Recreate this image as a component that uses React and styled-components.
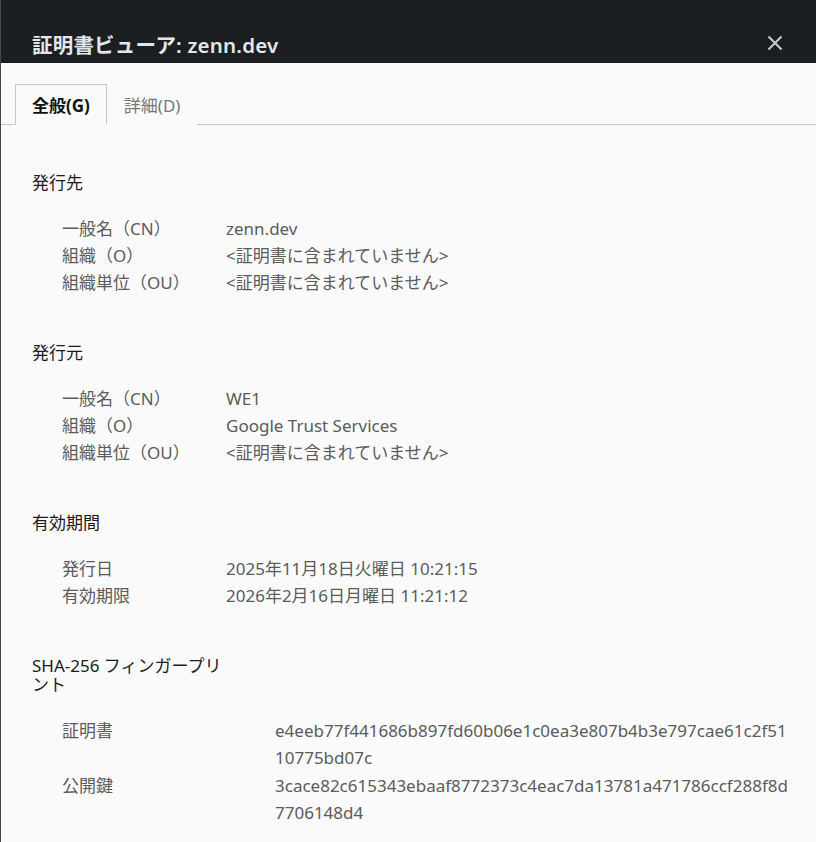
import React from "react";
import styled, { createGlobalStyle } from "styled-components";

const Global = createGlobalStyle`
  html, body { margin: 0; padding: 0; background: #fafafa; }
  body { font-family: "Noto Sans", "Noto Sans CJK JP", sans-serif; }
`;

const Window = styled.div`
  width: 816px;
  min-height: 842px;
  box-sizing: border-box;
  background: #fafafa;
  border-left: 1px solid #45484b;
  display: flex;
  flex-direction: column;
`;

const Header = styled.header`
  height: 63px;
  box-sizing: border-box;
  background: #1b1f22;
  display: flex;
  align-items: flex-end;
  justify-content: space-between;
  padding: 0 30px 4px 31px;
`;

const Title = styled.h1`
  margin: 0;
  font-size: 20.5px;
  font-weight: 600;
  line-height: 28px;
  color: #e4e7ea;
  letter-spacing: 0.2px;
`;

const CloseButton = styled.button`
  width: 22px;
  height: 22px;
  margin-bottom: 5px;
  padding: 0;
  border: none;
  background: transparent;
  display: flex;
  align-items: center;
  justify-content: center;
  cursor: pointer;
`;

const TabBar = styled.nav`
  display: flex;
  padding: 21px 0 0 14px;
  border-bottom: 1px solid #c8c8c8;
`;

const Tab = styled.button`
  height: 41px;
  box-sizing: border-box;
  margin-bottom: -1px;
  padding: 0 16px;
  font-family: inherit;
  font-size: 17px;
  font-weight: ${(p) => (p.$active ? 700 : 400)};
  color: ${(p) => (p.$active ? "#111" : "#767676")};
  background: #fafafa;
  border: 1px solid ${(p) => (p.$active ? "#c8c8c8" : "transparent")};
  border-bottom-color: ${(p) => (p.$active ? "#fafafa" : "transparent")};
  cursor: pointer;
`;

const Content = styled.main`
  display: flex;
  flex-direction: column;
  gap: 47px;
  padding: 48px 25px 0 31px;
`;

const Section = styled.section`
  display: flex;
  flex-direction: column;
  gap: 23px;
`;

const Heading = styled.h2`
  margin: 0;
  max-width: ${(p) => p.$maxWidth || "none"};
  font-size: 17px;
  font-weight: 400;
  line-height: 19px;
  color: #1a1a1a;
`;

const Table = styled.dl`
  margin: 0;
  padding-left: 30px;
  display: grid;
  grid-template-columns: ${(p) => p.$labelWidth}px 1fr;
  font-size: 17px;
  line-height: ${(p) => p.$lineHeight || 27}px;
  color: #5b5b5b;
`;

const Label = styled.dt`
  margin: 0;
`;

const Value = styled.dd`
  margin: 0;
  word-break: break-all;
`;

const sections = [
  {
    title: "発行先",
    labelWidth: 164,
    rows: [
      ["一般名（CN）", "zenn.dev"],
      ["組織（O）", "<証明書に含まれていません>"],
      ["組織単位（OU）", "<証明書に含まれていません>"],
    ],
  },
  {
    title: "発行元",
    labelWidth: 164,
    rows: [
      ["一般名（CN）", "WE1"],
      ["組織（O）", "Google Trust Services"],
      ["組織単位（OU）", "<証明書に含まれていません>"],
    ],
  },
  {
    title: "有効期間",
    labelWidth: 164,
    rows: [
      ["発行日", "2025年11月18日火曜日 10:21:15"],
      ["有効期限", "2026年2月16日月曜日 11:21:12"],
    ],
  },
  {
    title: "SHA-256 フィンガープリント",
    labelWidth: 213,
    maxWidth: "200px",
    lineHeight: 27.4,
    rows: [
      ["証明書", "e4eeb77f441686b897fd60b06e1c0ea3e807b4b3e797cae61c2f5110775bd07c"],
      ["公開鍵", "3cace82c615343ebaaf8772373c4eac7da13781a471786ccf288f8d7706148d4"],
    ],
  },
];

export default function App() {
  return (
    <>
      <Global />
      <Window>
        <Header>
          <Title>証明書ビューア: zenn.dev</Title>
          <CloseButton aria-label="閉じる">
            <svg width="16" height="16" viewBox="0 0 16 16">
              <path d="M1.5 1.5 L14.5 14.5 M14.5 1.5 L1.5 14.5" stroke="#c9ccce" strokeWidth="2" />
            </svg>
          </CloseButton>
        </Header>
        <TabBar>
          <Tab $active>全般(G)</Tab>
          <Tab>詳細(D)</Tab>
        </TabBar>
        <Content>
          {sections.map((s) => (
            <Section key={s.title}>
              <Heading $maxWidth={s.maxWidth}>{s.title}</Heading>
              <Table $labelWidth={s.labelWidth} $lineHeight={s.lineHeight}>
                {s.rows.map(([l, v]) => (
                  <React.Fragment key={l}>
                    <Label>{l}</Label>
                    <Value>{v}</Value>
                  </React.Fragment>
                ))}
              </Table>
            </Section>
          ))}
        </Content>
      </Window>
    </>
  );
}
